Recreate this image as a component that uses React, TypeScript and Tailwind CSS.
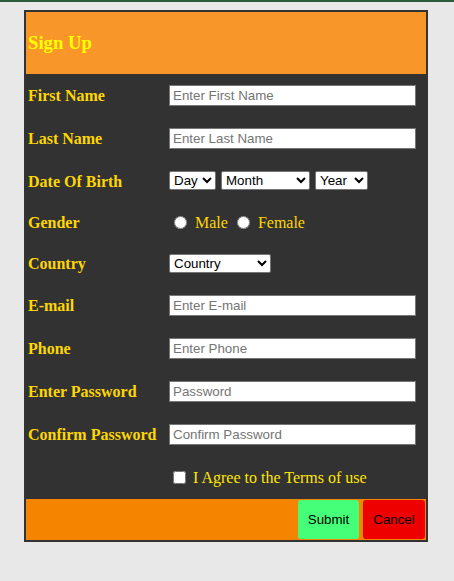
import React from "react";

const rows: { label: string; placeholder: string; h: string }[] = [
  { label: "E-mail", placeholder: "Enter E-mail", h: "h-[44px]" },
  { label: "Phone", placeholder: "Enter Phone", h: "h-[42px]" },
  { label: "Enter Password", placeholder: "Password", h: "h-[44px]" },
  { label: "Confirm Password", placeholder: "Confirm Password", h: "h-[42px]" },
];

function Row({ label, h, children }: { label?: string; h: string; children: React.ReactNode }) {
  return (
    <div className={`flex items-center ${h}`}>
      <div className="w-[143px] pl-[2px] pt-[2px] font-bold text-[16px] text-[#ffd700]">{label}</div>
      <div className="flex items-center">{children}</div>
    </div>
  );
}

function TextInput({ placeholder }: { placeholder: string }) {
  return (
    <input
      type="text"
      placeholder={placeholder}
      className="w-[247px] h-[21px] bg-white border border-[#767676] px-[3px] text-[13.33px] text-black placeholder:text-[#757575] [font-family:Arial,'Liberation_Sans',sans-serif]"
    />
  );
}

const selectCls =
  "h-[19px] bg-white border border-[#767676] rounded-[2px] text-[13.33px] text-black [font-family:Arial,'Liberation_Sans',sans-serif]";

export default function App() {
  return (
    <div className="min-h-[581px] bg-[#e8e8e8] border-t-2 border-[#2d5b3a] [font-family:'Times_New_Roman','Liberation_Serif',serif]">
      <div className="ml-[24px] mt-[8px] w-[404px] border-2 border-[#333333] bg-[#323232]">
        <div className="h-[62px] bg-[#f9962a] flex items-center pl-[2px]">
          <h3 className="text-[18.72px] font-bold text-[#ffff00]">Sign Up</h3>
        </div>

        <Row label="First Name" h="h-[42px]">
          <TextInput placeholder="Enter First Name" />
        </Row>
        <Row label="Last Name" h="h-[44px]">
          <TextInput placeholder="Enter Last Name" />
        </Row>
        <Row label="Date Of Birth" h="h-[41px]">
          <div className="flex items-center gap-[5px]">
            <select className={`${selectCls} w-[47px]`}>
              <option>Day</option>
            </select>
            <select className={`${selectCls} w-[89px]`}>
              <option>Month</option>
            </select>
            <select className={`${selectCls} w-[53px]`}>
              <option>Year</option>
            </select>
          </div>
        </Row>
        <Row label="Gender" h="h-[42px]">
          <label className="flex items-center text-[16px] text-[#ffd700] pt-[1px]">
            <input type="radio" name="g" className="ml-[5px] mr-[3px] w-[13px] h-[13px]" />
            <span className="ml-[5px]">Male</span>
          </label>
          <label className="flex items-center text-[16px] text-[#ffd700] pt-[1px]">
            <input type="radio" name="g" className="ml-[9px] mr-[3px] w-[13px] h-[13px]" />
            <span className="ml-[5px]">Female</span>
          </label>
        </Row>
        <Row label="Country" h="h-[40px]">
          <select className={`${selectCls} w-[102px]`}>
            <option>Country</option>
          </select>
        </Row>
        {rows.map((r) => (
          <Row key={r.label} label={r.label} h={r.h}>
            <TextInput placeholder={r.placeholder} />
          </Row>
        ))}
        <Row h="h-[44px]">
          <label className="flex items-center text-[16px] text-[#ffe600] pt-[1px]">
            <input type="checkbox" className="ml-[4px] w-[13px] h-[13px]" />
            <span className="ml-[7px]">I Agree to the Terms of use</span>
          </label>
        </Row>

        <div className="h-[41px] bg-[#f58400] flex items-center justify-end gap-[4px] pr-[1px]">
          <button className="w-[61px] h-[39px] rounded-[3px] bg-[#44ff77] text-black text-[13.33px] [font-family:Arial,'Liberation_Sans',sans-serif]">
            Submit
          </button>
          <button className="w-[62px] h-[39px] rounded-[3px] bg-[#ee0000] text-black text-[13.33px] [font-family:Arial,'Liberation_Sans',sans-serif]">
            Cancel
          </button>
        </div>
      </div>
    </div>
  );
}
